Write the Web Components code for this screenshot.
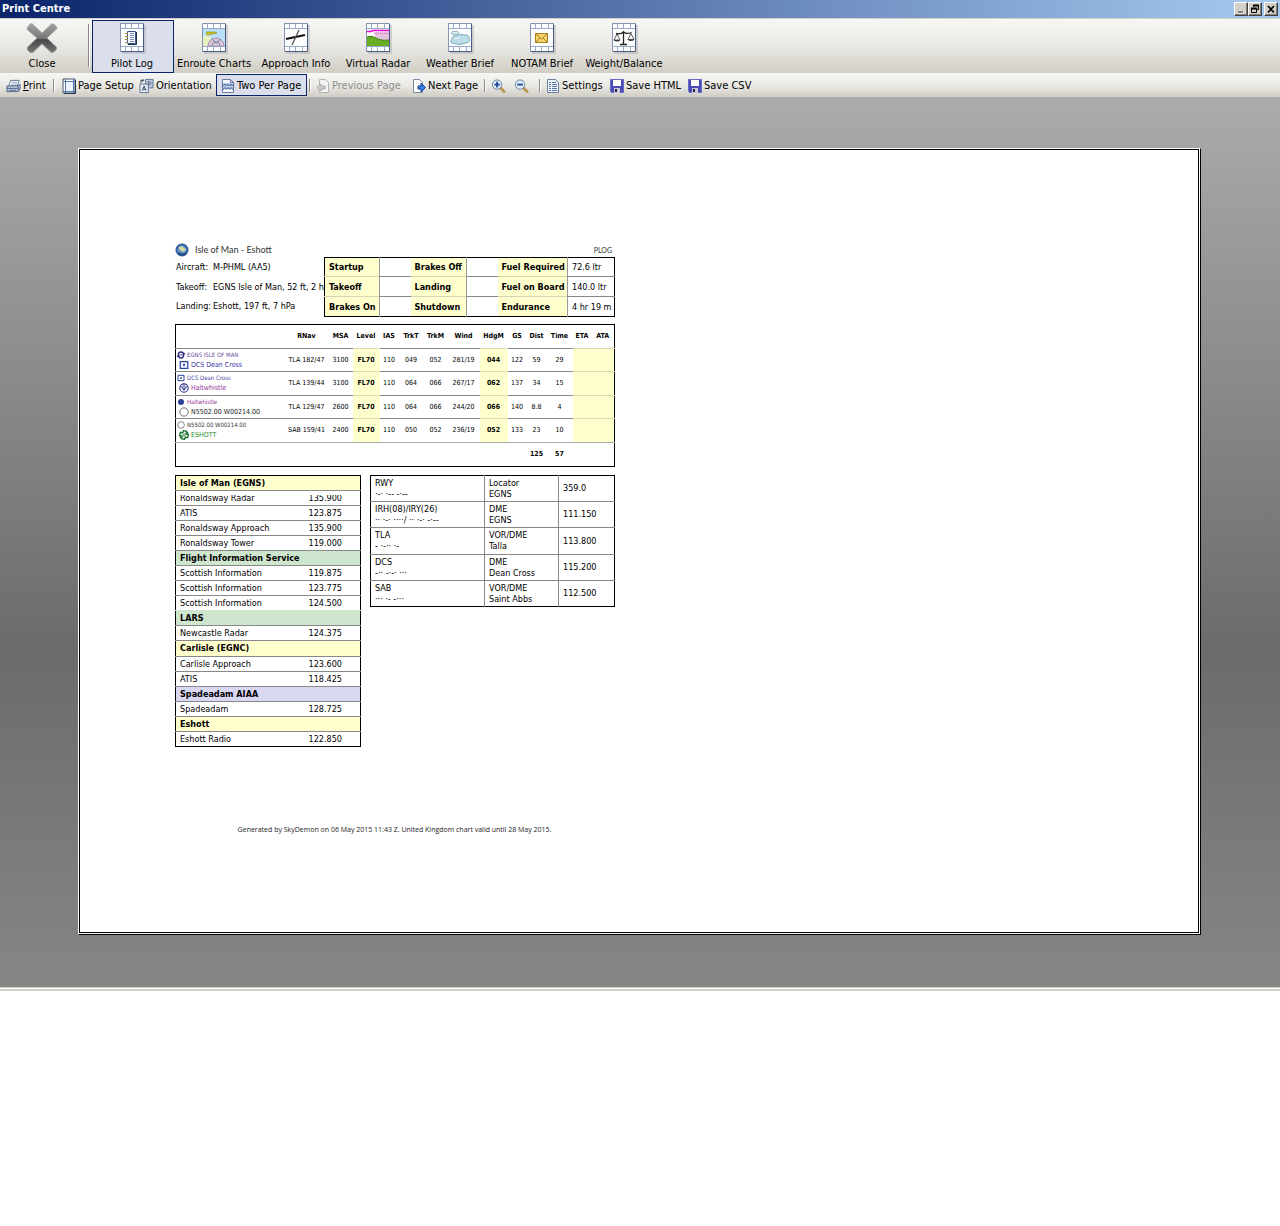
<!DOCTYPE html>
<html lang="en">
<head>
<meta charset="utf-8">
<title>Print Centre</title>
<style>
body{margin:0;background:#fff;color:#000;font:11px/14px "DejaVu Sans Condensed","DejaVu Sans",sans-serif}
</style>
</head>
<body>
<print-centre></print-centre>
<script>
const ICONS={
close:['0 0 32 32','<defs><linearGradient id="a" x1="0" y1="0" x2="0" y2="1"><stop offset="0" stop-color="#a2a2a2"/><stop offset=".5" stop-color="#777"/><stop offset=".55" stop-color="#484848"/><stop offset="1" stop-color="#777"/></linearGradient></defs><path d="M6 1L16 10.500L26 1Q28 0 31 4Q32 6 30 7L21 15.500L31 25Q32 27 28 30Q26 31 25 30L16 21.500L7 30Q5 32 2 29Q0 27 1 25L11 15.500L1 7Q0 5 3 2Q5 0 6 1Z" fill="url(#a)" stroke="#999" stroke-width="1"/>'],
print:['0 0 16 16','<path d="M5 2h9l-2 6H3z" fill="#fff" stroke="#5d7290"/><path d="M6 4h6M5.500 6h6" stroke="#8aa0c0"/><path d="M1 8h12l2-2v5l-2 3H1z" fill="#c9d3e4" stroke="#485e80"/><path d="M1 10.500h12M3 12.500h8M13 8v6" stroke="#485e80"/>'],
setup:['0 0 14 16','<path d="M1 1h12v14H1z" fill="#fff" stroke="#456"/><path d="M1 3.500h12M1 13.500h12M3.500 1v14M11.500 1v14" stroke="#5577b5"/><path d="M4 4h7v9H4z" fill="#eef3fb"/><path d="M13.500 2v13.500H2" fill="none" stroke="#234"/>'],
orient:['0 0 16 16','<path d="M7 1h8v9H7z" fill="#b9c6da" stroke="#5f7596"/><path d="M1 6h9v9H1z" fill="#e6edf7" stroke="#5f7596"/><path d="M3.500 13l2-5 2 5M4.500 11.500h2.500" fill="none" stroke="#345"/><path d="M10 3l3 2-3 2z" fill="none" stroke="#567"/><path d="M2 5V2h3M3.500.500L5 2 3.500 3.500" fill="none" stroke="#345"/>'],
two:['0 0 14 16','<path d="M1.500 1.500h8l3 3v10h-11z" fill="#f7faff" stroke="#6a7fa0"/><path d="M2 5h10v6H2z" fill="#b9cbe6"/><path d="M1 6l1.500 2L4 6l1.500 2L7 6l1.500 2L10 6l1.500 2L13 6M1 9.500L2.500 11.500 4 9.500l1.500 2L7 9.500l1.500 2L10 9.500l1.500 2L13 9.500" fill="none" stroke="#48679a"/><path d="M9.500 1.500v3h3" fill="none" stroke="#6a7fa0"/>'],
prev:['0 0 14 16','<path d="M3.500 1.500h6l3 3v10h-9z" fill="#f3f3f3" stroke="#b5b5b5"/><path d="M1 9.500L5 6v2h4v3H5v2z" fill="#ccc" stroke="#aaa"/>'],
next:['0 0 14 16','<path d="M1.500 1.500h6l3 3v10h-9z" fill="#fff" stroke="#7a8ba8"/><path d="M13.500 9.500L9 5v3H6v3h3v3z" fill="#3b7ce0" stroke="#123f96"/>'],
zin:['0 0 16 16','<path d="M10.500 10.500l3.500 3.500" stroke="#b8934a" stroke-width="3" stroke-linecap="round"/><circle cx="6.500" cy="6.500" r="5" fill="#dcecfa" stroke="#6c7f96"/><path d="M3.500 6.500h6M6.500 3.500v6" stroke="#234f9a" stroke-width="2"/>'],
zout:['0 0 16 16','<path d="M10.500 10.500l3.500 3.500" stroke="#b8934a" stroke-width="3" stroke-linecap="round"/><circle cx="6.500" cy="6.500" r="5" fill="#dcecfa" stroke="#6c7f96"/><path d="M3.500 6.500h6" stroke="#234f9a" stroke-width="2"/>'],
settings:['0 0 14 16','<path d="M1.500 1.500h8l3 3v10h-11z" fill="#f4f8fe" stroke="#6a7fa0"/><path d="M3 4.500h2M3 6.500h2M3 8.500h2M3 10.500h2M3 12.500h2M6 4.500h4M6 6.500h5M6 8.500h5M6 10.500h5M6 12.500h5" stroke="#56749f"/>'],
save:['0 0 14 16','<path d="M.500 1.500h13v13h-12l-1-1z" fill="#4a4ab4" stroke="#6a6ac8"/><path d="M3 2h8v6H3z" fill="#fff"/><path d="M4 10h6v5H4z" fill="#c6cbe0"/><path d="M5 11h2v3H5z" fill="#223"/>'],
min:['0 0 10 10','<path d="M2 8.500h5.500" stroke="#fff" stroke-width="2"/><path d="M2 8h5" stroke="#808080" stroke-width="2"/>'],
restore:['0 0 10 10','<path d="M3.500 3V1.500h5v4H7M1.500 4.500h5v4h-5z" fill="none" stroke="#000"/><path d="M3 1.500h6M1 4.500h6" stroke="#000" stroke-width="2"/>'],
x:['0 0 10 10','<path d="M2 2l6 6.500M8 2L2 8.500" stroke="#000" stroke-width="1.700"/>'],
globe:['0 0 14 14','<circle cx="7" cy="7" r="6.500" fill="#27569a"/><circle cx="7" cy="7" r="5" fill="#5a8cc0"/><path d="M4 4l3-1 2 2 2 1-2 3-3-1-2-2z" fill="#d5d9a0"/><path d="M3 10q4 3 8 0" stroke="#102f66" fill="none"/>'],
aero:['0 0 12 12','<ellipse cx="6" cy="6" rx="4" ry="4.500" fill="#fff" stroke="#2d2d86" stroke-width="2"/><path d="M0 8.500l12-5" stroke="#2d2d86" stroke-width="2"/><path d="M3.500 7l5-2" stroke="#fff" stroke-width="1"/>'],
vor:['0 0 12 12','<path d="M1.500 2h9v8h-9z" fill="#fff" stroke="#2849a0" stroke-width="1.500"/><circle cx="6" cy="6" r="1.400" fill="#2849a0"/>'],
vrp:['0 0 12 12','<circle cx="6" cy="6" r="5" fill="#fff" stroke="#2d2d86" stroke-width="1.300"/><path d="M3 4l3 4.500L9 4M6 2v3" fill="none" stroke="#2d2d86" stroke-width="1.300"/>'],
dot:['0 0 12 12','<circle cx="6" cy="6" r="4.500" fill="#2f3d9a"/>'],
ring:['0 0 12 12','<circle cx="6" cy="6" r="5" fill="#fff" stroke="#555"/>'],
field:['0 0 12 12','<path d="M4 1h4v3h3v4H8v3H4V8H1V4h3z" fill="#fff" stroke="#17702a" stroke-width="1.600" transform="rotate(15 6 6)"/><path d="M1 9l10-6" stroke="#17702a" stroke-width="2.400"/><path d="M3 7.800l6-3.600" stroke="#fff" stroke-width=".800"/>']
};
const FRAME='<path d="M2 2h24v29H2z" fill="#999" opacity=".35"/><path d="M.500.500h23v28H.500z" fill="#fdfeff" stroke="#8793b0"/><path d="M1 5.500h22M1 23.500h22M5.500 1v4M18.500 1v4M11.500 1v4M5.500 24v4M18.500 24v4M11.500 24v4" stroke="#9ba9c9"/><path d="M23.500 1v27.500H1" fill="none" stroke="#4a5a88"/>';
const SHEETS={
log:'<path d="M7.500 8.500h8v12h-8z" fill="#f3f6ff" stroke="#35558c"/><path d="M16.500 9v12.500H8" stroke="#234" fill="none"/><path d="M10 10.500h4M10 12.500h4M10 14.500h4M10 16.500h4M10 18.500h4" stroke="#7a8fbe"/><path d="M5 10.500h3M5 13.500h3M5 16.500h3M5 19.500h3" stroke="#b08a40"/>',
chart:'<path d="M1 6h22v17H1z" fill="#b9e0f6"/><path d="M1 13q6-2 8 2l5 8H1z" fill="#e4efc2"/><path d="M6 23a8 8 0 0 1 16 0z" fill="#dcc3d8" stroke="#a898b8"/><path d="M10 23a4 4 0 0 1 8 0" fill="none" stroke="#8793b0"/><path d="M14 20l-4-4M14 20l5-4" stroke="#68a"/><path d="M4 9h9l2 1-4 1-6 1z" fill="#d5c418" stroke="#8b8b20" stroke-width=".600"/>',
approach:'<path d="M2 16l19-4" stroke="#111" stroke-width="1.800"/><path d="M15 7L8 22" stroke="#555" stroke-width="1.300"/>',
radar:'<path d="M1 6h22v17H1z" fill="#fff"/><path d="M8 9h15v8H10z" fill="#e5c3df"/><path d="M1 14q5-2 9 1t13 2v6H1z" fill="#68ad22"/><path d="M1 14q5-2 9 1t13 2" fill="none" stroke="#3c7d12"/><path d="M1 8.500h4l2-1h16" fill="none" stroke="#e000d8" stroke-width="1.500"/><path d="M8 10.500h15" stroke="#e66ad0" stroke-dasharray="1 1"/>',
cloud:'<path d="M4 20q-3-2 0-4 0-4 5-3 3-3 7-1 5-1 5 3 2 4-3 5-7 3-14 0z" fill="#bcdce8" stroke="#7da9bd"/><ellipse cx="7" cy="10" rx="4" ry="1.700" fill="#d6eaf1" stroke="#9ab9c7"/><path d="M7 16q3-2 5-1" stroke="#fff" fill="none"/>',
mail:'<path d="M5.500 10.500h12v9h-12z" fill="#f6d46c" stroke="#a77c1d"/><path d="M6 11l5.500 5 5.500-5M6 19l4-4M17 19l-4-4" fill="none" stroke="#a77c1d"/>',
scales:'<path d="M11.500 8v13M8 21.500h7M4 10.500q5 1 7.500-1.500 3 2.500 8 .500" fill="none" stroke="#222" stroke-width="1.300"/><path d="M5 11l-3 6h6zM19 10.500l-3 6h6z" fill="none" stroke="#333" stroke-width=".800"/><path d="M1.500 17h7q-3.500 3-7 0zM15.500 16.500h7q-3.500 3-7 0z" fill="#333"/>'
};
for(const k in SHEETS)ICONS[k]=['0 0 24 31',FRAME+SHEETS[k]];
const element=(name,html)=>customElements.define(name,class extends HTMLElement{
  constructor(){super();this.attachShadow({mode:'open'});}
  connectedCallback(){this.shadowRoot.innerHTML=typeof html==='function'?html(this):html;}
});
element('pc-icon',el=>{const [box,art]=ICONS[el.getAttribute('name')];return `<style>:host{display:block;flex:none;width:var(--w,14px);height:var(--h,16px)}svg{display:block;width:100%;height:100%;overflow:visible}</style><svg viewBox="${box}" aria-hidden="true">${art}</svg>`;});

element('title-bar',`<style>
:host{display:flex;align-items:center;height:18px;padding:0 2px;background:linear-gradient(90deg,#0a246a,#a6caf0);border-bottom:1px solid #d4d0c8;color:#fff}
h1{flex:1;margin:0;font:bold 11px/18px "DejaVu Sans Condensed",sans-serif}
button{width:14px;height:14px;padding:0 1px;background:#d4d0c8;border:1px solid;border-color:#fff #404040 #404040 #fff;box-shadow:inset -1px -1px #808080}
button:last-child{margin-left:2px}
pc-icon{--w:10px;--h:10px}
</style><h1><slot></slot></h1><button aria-label="Minimise"><pc-icon name="min"></pc-icon></button><button aria-label="Restore"><pc-icon name="restore"></pc-icon></button><button aria-label="Close window"><pc-icon name="x"></pc-icon></button>`);

element('ribbon-button',el=>`<style>
:host{display:block;width:82px}
button{display:flex;flex-direction:column;align-items:center;gap:3px;width:100%;height:53px;padding:2px 2px 0 0;border:1px solid transparent;background:none;font:inherit;white-space:nowrap;color:#000}
:host([pressed]) button{border-color:#0a246a;background:#dadfeb}
pc-icon{--w:24px;--h:31px}
:host([large]) button{padding-right:0}
:host([large]) pc-icon{--w:32px;--h:31px}
</style><button><pc-icon name="${el.getAttribute('icon')}"></pc-icon><span><slot></slot></span></button>`);

element('tool-button',el=>`<style>
:host{display:block}
button{display:flex;align-items:center;gap:2px;width:100%;height:22px;padding:2px 0 0 4px;border:1px solid transparent;background:none;font:inherit;white-space:nowrap;color:#000}
button:disabled{color:#8d8d8d}
:host([pressed]) button{border-color:#0a246a;background:#dadfeb}
:host([wide]) pc-icon{--w:15px}
</style><button ${el.hasAttribute('disabled')?'disabled':''} ${el.hasAttribute('label')?`aria-label="${el.getAttribute('label')}"`:''}><pc-icon name="${el.getAttribute('icon')}"></pc-icon><span><slot></slot></span></button>`);

element('main-ribbon',`<style>
:host{display:flex;height:54px;align-items:flex-start;padding-top:1px;box-sizing:border-box;background:linear-gradient(#f6f6f4,#eae9e5 50%,#d0cdc4)}
i{width:1px;height:43px;margin:4px 2px 0 4px;background:#888;border-right:1px solid #fff}
ribbon-button[large]{width:84px}
</style><ribbon-button large icon="close">Close</ribbon-button><i></i>
<ribbon-button pressed icon="log">Pilot Log</ribbon-button><ribbon-button icon="chart">Enroute Charts</ribbon-button><ribbon-button icon="approach">Approach Info</ribbon-button><ribbon-button icon="radar">Virtual Radar</ribbon-button><ribbon-button icon="cloud">Weather Brief</ribbon-button><ribbon-button icon="mail">NOTAM Brief</ribbon-button><ribbon-button icon="scales">Weight/Balance</ribbon-button>`);

element('tool-strip',`<style>
:host{display:grid;grid-template-columns:50px 4px 79px 82px 91px 4px 96px 76px 3px 23px 28px 4px 64px 78px 70px;align-items:center;height:24px;padding-left:1px;background:linear-gradient(#f6f6f4,#ebeae6 50%,#cfccc3)}
i{width:1px;height:13px;margin-left:auto;background:#888;border-right:1px solid #fff}
</style><tool-button wide icon="print"><u>P</u>rint</tool-button><i></i><tool-button icon="setup" style="margin-left:2px">Page Setup</tool-button><tool-button wide icon="orient">Orientation</tool-button><tool-button pressed icon="two">Two Per Page</tool-button><i></i><tool-button disabled icon="prev">Previous Page</tool-button><tool-button icon="next">Next Page</tool-button><i></i><tool-button wide label="Zoom in" icon="zin"></tool-button><tool-button wide label="Zoom out" icon="zout"></tool-button><i></i><tool-button icon="settings">Settings</tool-button><tool-button icon="save">Save HTML</tool-button><tool-button icon="save">Save CSV</tool-button>`);

element('preview-area',`<style>
:host{display:block;padding:51px 79px 52px 78px;background:linear-gradient(#ababab,#6b6b6b 62%,#868686);border-bottom:1px solid #d4d0c8}
div{border:1px solid #fff;border-right-color:#000;border-bottom-color:#000;aspect-ratio:1121/785}
section{box-sizing:border-box;height:100%;border:1px solid #000;background:#fff;padding:93px 95px}
main{padding-right:1px;padding-bottom:1px;background:#fff;height:100%;box-sizing:border-box}
</style><div><main><section><slot></slot></section></main></div>`);

const T='table{border-collapse:collapse;table-layout:fixed;width:100%;box-sizing:border-box;border:1px solid #000}td,th{padding:0;box-sizing:border-box;font-weight:normal;text-align:left;white-space:nowrap;overflow:hidden}';

element('flight-times',()=>{
 const rows=[['Startup','Brakes Off','Fuel Required','72.6 ltr',19],['Takeoff','Landing','Fuel on Board','140.0 ltr',20],['Brakes On','Shutdown','Endurance','4 hr 19 m',20]];
 return `<style>:host{display:block;font-size:9px;line-height:12px}${T}td,th{padding-left:4px}tr+tr>*{border-top:1px solid #888}th{background:#ffffce;font-weight:bold}tr+tr>th{border-top-color:#d5d5b5}td{border-left:1px solid #999}td.e{padding:0}</style><table><colgroup>${[55,31,56,31,70].map(w=>`<col style="width:${w}px">`).join('')}<col></colgroup>${rows.map(r=>`<tr style="height:${r[4]}px"><th scope="row">${r[0]}</th><td class="e"></td><th scope="row">${r[1]}</th><td class="e"></td><th scope="row">${r[2]}</th><td>${r[3]}</td></tr>`).join('')}</table>`;});

element('leg-point',el=>`<style>
:host{display:flex;align-items:center;gap:2px;height:11px;padding-left:3px;font-size:7px;line-height:10px;color:var(--ink)}
pc-icon{--w:10px;--h:10px}
:host([from]){gap:2px;height:9px;padding-left:1px;font-size:6px;line-height:8px}
:host([from]) pc-icon{--w:8px;--h:8px}
</style><pc-icon name="${el.getAttribute('icon')}"></pc-icon><span><slot></slot></span>`);

element('leg-table',()=>{
 const head=['','RNav','MSA','Level','IAS','TrkT','TrkM','Wind','HdgM','GS','Dist','Time','ETA','ATA'];
 const widths=[109,44,24,27,19,25,24,32,28,19,20,26,19,23];
 const mag='#93309a';
 const legs=[
 ['aero','EGNS ISLE OF MAN','#6a4a9c','vor','DCS Dean Cross','#3535a8','TLA 182/47 3100 FL70 110 049 052 281/19 044 122 59 29',23],
 ['vor','DCS Dean Cross','#4848a0','vrp','Haltwhistle',mag,'TLA 139/44 3100 FL70 110 064 066 267/17 062 137 34 15',24],
 ['dot','Haltwhistle',mag,'ring','N5502.00 W00214.00','#222','TLA 129/47 2600 FL70 110 064 066 244/20 066 140 8.8 4',23],
 ['ring','N5502.00 W00214.00','#333','field','ESHOTT','#258a2c','SAB 159/41 2400 FL70 110 050 052 236/19 052 133 23 10',24]];
 return `<style>:host{display:block;font-size:7px;line-height:9px}${T}
 th,td{text-align:center;overflow:visible}th{font-weight:bold;height:24px}td{border-top:1px solid #888}.y{background:#ffffce;border-top-color:#dcdcb8}.b{font-weight:bold}td:first-child{text-align:left}
 .t td{height:24px;font-weight:bold;border-top:1px solid #aaa}</style>
 <table><colgroup>${widths.map(w=>`<col style="width:${w}px">`).join('')}</colgroup><thead><tr>${head.map(h=>`<th scope="col">${h}</th>`).join('')}</tr></thead><tbody>
 ${legs.map(l=>{const c=l[6].split(' ');const v=[c[0]+' '+c[1],...c.slice(2)];return `<tr style="height:${l[7]}px"><td><leg-point from icon="${l[0]}" style="--ink:${l[2]}">${l[1]}</leg-point><leg-point icon="${l[3]}" style="--ink:${l[5]}">${l[4]}</leg-point></td>${v.map((x,i)=>`<td${i==2||i==7?' class="y b"':''}>${x}</td>`).join('')}<td class="y"></td><td class="y"></td></tr>`}).join('')}
 <tr class="t"><td colspan="10"></td><td>125</td><td>57</td><td colspan="2"></td></tr></tbody></table>`;});

element('radio-table',()=>{
 const rows=[['y','Isle of Man (EGNS)'],['top','Ronaldsway Radar','135.900'],['','ATIS','123.875'],['','Ronaldsway Approach','135.900'],['','Ronaldsway Tower','119.000'],['g','Flight Information Service'],['','Scottish Information','119.875'],['','Scottish Information','123.775'],['cut','Scottish Information','124.500'],['g','LARS'],['','Newcastle Radar','124.375'],['y tall','Carlisle (EGNC)'],['','Carlisle Approach','123.600'],['','ATIS','118.425'],['p','Spadeadam AIAA'],['','Spadeadam','128.725'],['y','Eshott'],['','Eshott Radio','122.850']];
 return `<style>:host{display:block;flex:none;width:186px;font-size:9px;line-height:12px}${T}
 td,th{padding-left:4px}tr+tr>*{border-top:1px solid #888}
 div{height:14px;line-height:14px;overflow:hidden}
 th{font-weight:bold}.y th{background:#ffffce}.g th{background:#cee6ce}.p th{background:#d8d8f2}
 .tall div{height:15px}
 .top div{clip-path:inset(4px 0 0)}.cut div{clip-path:inset(0 0 4px)}.cut+tr>*{border-top-color:#cee6ce}
 </style><table><colgroup><col style="width:129px"><col></colgroup>${rows.map(r=>r[2]?`<tr class="${r[0]}"><td><div>${r[1]}</div></td><td><div>${r[2]}</div></td></tr>`:`<tr class="${r[0]}"><th colspan="2"><div>${r[1]}</div></th></tr>`).join('')}</table>`;});

element('navaid-table',()=>{
 const rows=[['RWY','·-· ·-- -·--','Locator','EGNS','359.0',26],['IRH(08)/IRY(26)','·· ·-· ····/ ·· ·-· -·--','DME','EGNS','111.150',26],['TLA','- ·-·· ·-','VOR/DME','Talla','113.800',27],['DCS','-·· -·-· ···','DME','Dean Cross','115.200',26],['SAB','··· ·- -···','VOR/DME','Saint Abbs','112.500',26]];
 return `<style>:host{display:block;flex:1;font-size:9px;line-height:11px}${T}td{padding-left:4px}td+td{border-left:1px solid #888}tr+tr>td{border-top:1px solid #888}div{height:11px}</style><table><colgroup><col style="width:114px"><col style="width:74px"><col></colgroup>${rows.map(r=>`<tr style="height:${r[5]}px"><td><div>${r[0]}</div><div>${r[1]}</div></td><td><div>${r[2]}</div><div>${r[3]}</div></td><td>${r[4]}</td></tr>`).join('')}</table>`;});

element('pilot-log',`<style>
:host{display:block;width:440px}
header{display:flex;align-items:center;gap:6px;height:14px;font:9px/12px Lato,sans-serif;color:#333}
header span{flex:1}header small{font-size:7px;padding-right:3px}
.top{display:flex;margin-bottom:7px;font-size:9px;line-height:12px}
dl{flex:1;min-width:0;display:grid;grid-template-columns:37px 1fr;grid-template-rows:20px 19px 20px;align-items:center;margin:0;padding-left:1px;white-space:nowrap}
dd,dt{margin:0}
flight-times{width:291px}
leg-table{margin-bottom:8px}
.cols{display:flex;align-items:flex-start;gap:9px}
footer{margin-top:77px;padding-right:1px;text-align:center;font:7px/12px "Open Sans",sans-serif;color:#222}
pc-icon{--w:14px;--h:14px}
</style><header><pc-icon name="globe"></pc-icon><span>Isle of Man - Eshott</span><small>PLOG</small></header>
<div class="top"><dl><dt>Aircraft:</dt><dd>M-PHML (AA5)</dd><dt>Takeoff:</dt><dd>EGNS Isle of Man, 52 ft, 2 hP</dd><dt>Landing:</dt><dd>Eshott, 197 ft, 7 hPa</dd></dl><flight-times></flight-times></div>
<leg-table></leg-table><div class="cols"><radio-table></radio-table><navaid-table></navaid-table></div>
<footer>Generated by SkyDemon on 06 May 2015 11:43 Z. United Kingdom chart valid until 28 May 2015.</footer>`);

element('print-centre',`<style>:host{display:block}.edge{height:2px;margin-top:1px;background:#d4d0c8}</style><title-bar>Print Centre</title-bar><main-ribbon></main-ribbon><tool-strip></tool-strip><preview-area><pilot-log></pilot-log></preview-area><div class="edge"></div>`);
</script>
</body>
</html>
